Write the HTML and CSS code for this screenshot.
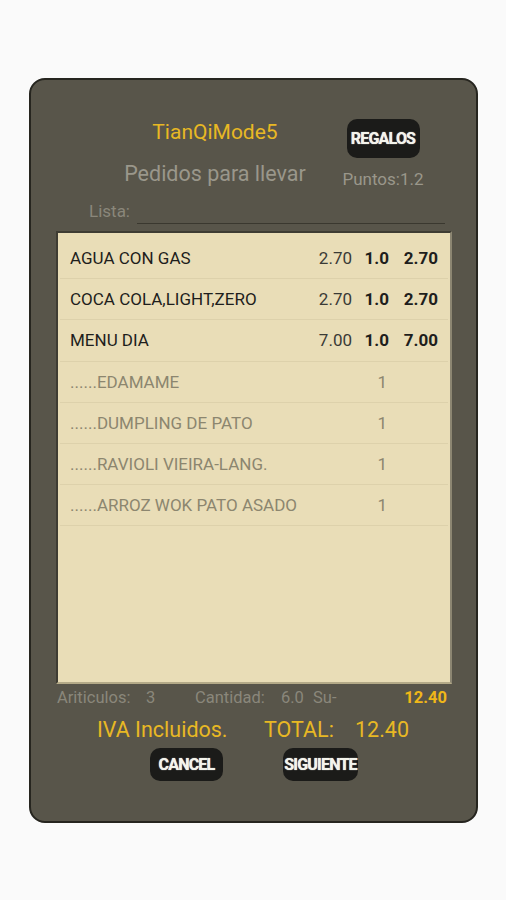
FILE: index.html
```html
<!DOCTYPE html>
<html lang="es">
<head>
    <meta charset="UTF-8">
    <meta name="viewport" content="width=device-width, initial-scale=1.0">
    <title>Pedidos para llevar</title>
    <link rel="stylesheet" href="styles.css">
</head>
<body>
    <div class="card">
        <div class="header">
            <div class="title">TianQiMode5</div>
            <div class="right"><button class="btn btn-regalos">REGALOS</button></div>
            <div class="subtitle">Pedidos para llevar</div>
            <div class="right points">Puntos:1.2</div>
        </div>

        <div class="lista">
            <span class="lista-label">Lista:</span>
            <span class="lista-line"></span>
        </div>

        <div class="panel">
            <div class="row">
                <span class="name">AGUA CON GAS</span>
                <span class="price">2.70</span>
                <span class="qty">1.0</span>
                <span class="total">2.70</span>
            </div>
            <div class="row">
                <span class="name">COCA COLA,LIGHT,ZERO</span>
                <span class="price">2.70</span>
                <span class="qty">1.0</span>
                <span class="total">2.70</span>
            </div>
            <div class="row">
                <span class="name">MENU DIA</span>
                <span class="price">7.00</span>
                <span class="qty">1.0</span>
                <span class="total">7.00</span>
            </div>
            <div class="row sub">
                <span class="name">......EDAMAME</span>
                <span class="price"></span>
                <span class="qty">1</span>
                <span class="total"></span>
            </div>
            <div class="row sub">
                <span class="name">......DUMPLING DE PATO</span>
                <span class="price"></span>
                <span class="qty">1</span>
                <span class="total"></span>
            </div>
            <div class="row sub">
                <span class="name">......RAVIOLI VIEIRA-LANG.</span>
                <span class="price"></span>
                <span class="qty">1</span>
                <span class="total"></span>
            </div>
            <div class="row sub">
                <span class="name">......ARROZ WOK PATO ASADO</span>
                <span class="price"></span>
                <span class="qty">1</span>
                <span class="total"></span>
            </div>
        </div>

        <div class="summary">
            <span>Ariticulos:</span>
            <span>3</span>
            <span>Cantidad:</span>
            <span>6.0</span>
            <span>Su-</span>
            <span class="s-sum">12.40</span>
        </div>

        <div class="totals">
            <span>IVA Incluidos.</span>
            <span>TOTAL:</span>
            <span>12.40</span>
        </div>

        <div class="actions">
            <button class="btn btn-cancel">CANCEL</button>
            <button class="btn btn-next">SIGUIENTE</button>
        </div>
    </div>
</body>
</html>
```

FILE: styles.css
```css
body {
    margin: 0;
    background-color: #fafafa;
    font-family: Roboto, "Liberation Sans", Arial, sans-serif;
}
.card {
    box-sizing: border-box;
    width: 449px;
    height: 745px;
    margin: 78px 0 0 29px;
    padding-top: 36px;
    background: #58554a;
    border: 2px solid #26251f;
    border-radius: 16px;
}
.header {
    display: grid;
    grid-template-columns: 230px 106px;
    grid-template-rows: 44px 34px;
    padding-left: 69px;
    align-items: center;
}
.title {
    text-align: center;
    color: #e8b824;
    font-size: 21px;
    margin-bottom: 12px;
}
.right {
    display: flex;
    justify-content: center;
}
.subtitle {
    text-align: center;
    color: #9a978b;
    font-size: 21.5px;
    margin-bottom: 8px;
}
.points {
    color: #9a978b;
    font-size: 17px;
    margin-top: 4px;
}
.btn {
    background: #1b1b19;
    color: #f4f4ec;
    border: none;
    border-radius: 10px;
    font-family: Roboto, "Liberation Sans", Arial, sans-serif;
    font-weight: bold;
    font-size: 16px;
    letter-spacing: -0.8px;
    padding: 0;
    text-shadow: 0 0 1px #ffffff;
}
.btn-regalos {
    width: 73px;
    height: 39px;
}
.lista {
    display: flex;
    align-items: flex-end;
    height: 32px;
    padding-left: 58px;
}
.lista-label {
    color: #8a877b;
    font-size: 17px;
    line-height: 20px;
    padding-bottom: 5px;
}
.lista-line {
    flex: none;
    width: 308px;
    margin-left: 7px;
    margin-bottom: 2px;
    border-bottom: 1px solid #3a382f;
}
.panel {
    box-sizing: border-box;
    width: 396px;
    height: 453px;
    margin: 5px 0 0 25px;
    padding: 5px 2px 0 2px;
    background: #e9ddb7;
    border: 2px solid #3e3c33;
    border-bottom-color: #b4aa88;
    border-right-color: #8c8672;
}
.row {
    display: grid;
    grid-template-columns: 1fr auto 37px 49px;
    align-items: center;
    height: 40.2px;
    padding: 0 10px 0 10px;
    border-bottom: 1px solid #ddd1ab;
    font-size: 17px;
    color: #1e1e1c;
}
.price {
    text-align: right;
    color: #3a3a36;
}
.qty,
.total {
    text-align: right;
    font-weight: bold;
}
.sub {
    color: #8c866f;
}
.sub .qty {
    font-weight: normal;
    padding-right: 2px;
}
.summary {
    display: grid;
    grid-template-columns: 89px 49px 86px 32px 1fr auto;
    align-items: center;
    height: 26px;
    padding: 0 29px 0 26px;
    font-size: 16.5px;
    color: #8a877b;
}
.s-sum {
    color: #f0b718;
    font-weight: bold;
}
.totals {
    display: grid;
    grid-template-columns: 167px 91px auto;
    align-items: center;
    height: 38px;
    padding-left: 66px;
    font-size: 21.5px;
    color: #e8b824;
}
.actions {
    display: flex;
    padding-left: 119px;
}
.btn-cancel {
    width: 73px;
    height: 33px;
}
.btn-next {
    width: 75px;
    height: 33px;
    margin-left: 60px;
}
```
